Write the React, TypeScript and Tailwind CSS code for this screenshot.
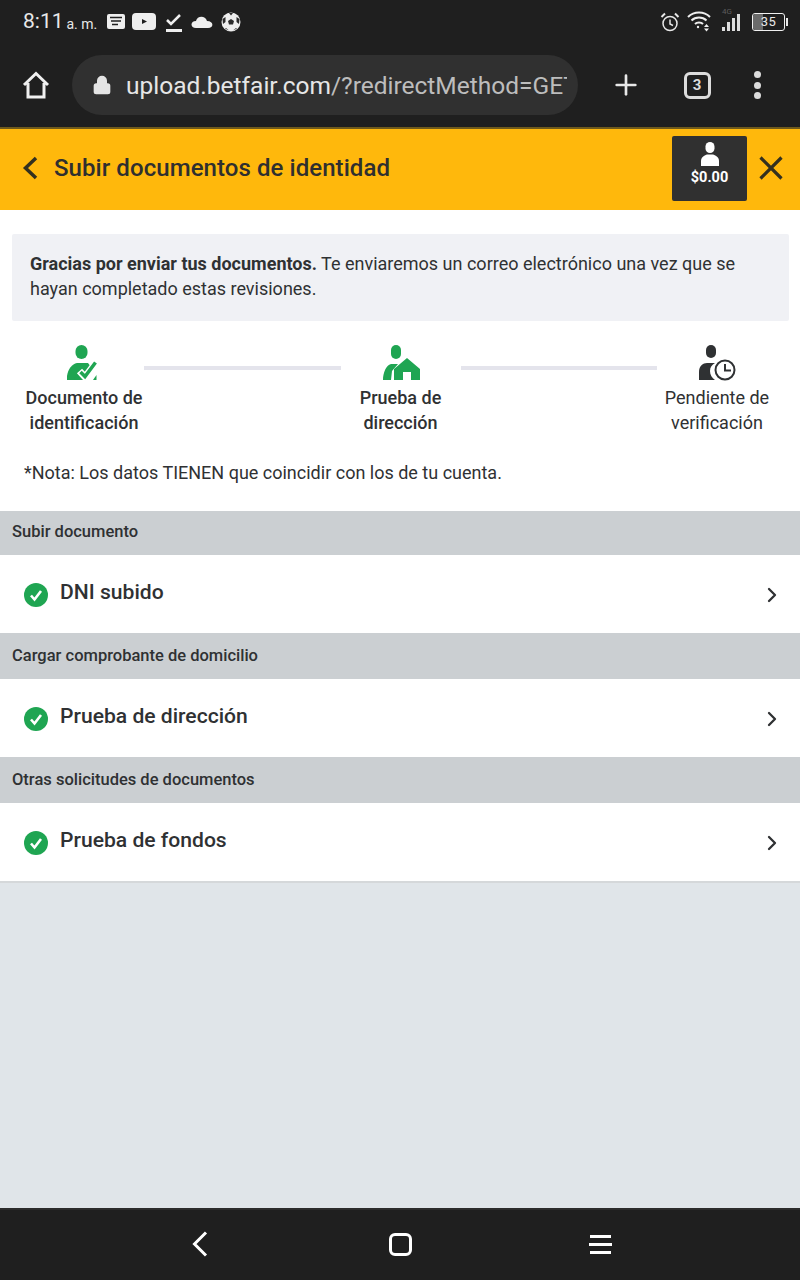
import { ChevronRight, Plus, Lock } from 'lucide-react';

function IdIcon() {
  return (
    <svg width="34" height="36" viewBox="0 0 34 36">
      <rect x="8.500" y="0" width="12" height="14" rx="6" fill="#1fa552" />
      <path d="M0 35 V31 C1 24 5 19 10 18 H21 L24 22 L19 35 Z" fill="#1fa552" />
      <path d="M12.500 26 L18 32 L29 17.500" stroke="#fff" strokeWidth="7" fill="none" />
      <path d="M13.500 27 L18 31.500 L28.500 17.500" stroke="#1fa552" strokeWidth="3.500" fill="none" />
      <path d="M9 30 L14 35 H7 Z" fill="#1fa552" />
      <path d="M26 35 L29.500 30 L29.500 35 Z" fill="#1fa552" />
    </svg>
  );
}

function AddressIcon() {
  return (
    <svg width="38" height="36" viewBox="0 0 38 36">
      <rect x="9" y="0" width="10" height="14" rx="5" fill="#1fa552" />
      <path d="M1 35 C1 28 4 20 9 19 H16 L10 26 L9 35 Z" fill="#1fa552" />
      <path d="M12 35 V24 L25 13 L38 24 V35 H29 V27 H21 V35 Z" fill="#1fa552" />
    </svg>
  );
}

function PendingIcon() {
  return (
    <svg width="37" height="36" viewBox="0 0 37 36">
      <rect x="7" y="0" width="10" height="13" rx="5" fill="#2f3133" />
      <circle cx="26" cy="25" r="9.500" fill="none" stroke="#2f3133" strokeWidth="2" />
      <path d="M0 35 L0 27 C0 21 4 18 8 18 L16 18 C13 20 11 22 11 26 C11 30 13 33 16 35 Z" fill="#2f3133" />
      <path d="M26 19 L26 25.500 L32 25.500" fill="none" stroke="#2f3133" strokeWidth="2" />
    </svg>
  );
}

function StatusBar() {
  return (
    <div className="h-[43px] flex items-center pl-[23px] pr-[12px] text-[#e8e8e8]">
      <span className="text-[21px] leading-none">8:11</span>
      <span className="text-[14px] leading-none ml-[3px] mt-[5px]">a. m.</span>
      <svg className="ml-[9px]" width="20" height="16" viewBox="0 0 20 16">
        <rect x="1" y="0" width="18" height="15" rx="2" fill="#eee" />
        <path d="M4 3.500 H16 M5 7 H15 M6 10.500 H12" stroke="#1f1f1f" strokeWidth="1.500" />
      </svg>
      <svg className="ml-[6px]" width="24" height="17" viewBox="0 0 24 17">
        <rect x="0" y="0" width="24" height="17" rx="4" fill="#eee" />
        <path d="M10 6 L15 8.500 L10 11 Z" fill="#1f1f1f" />
      </svg>
      <svg className="ml-[9px]" width="18" height="20" viewBox="0 0 18 20">
        <path d="M2 8 L6 12 L15 3" stroke="#eee" strokeWidth="2.500" fill="none" />
        <rect x="1" y="17" width="16" height="3" fill="#eee" />
      </svg>
      <svg className="ml-[8px]" width="22" height="15" viewBox="0 0 22 15">
        <path d="M5 14 C-1 14 -1 7 5 7 C6 2 14 1 16 7 C23 7 23 14 17 14 Z" fill="#eee" />
      </svg>
      <svg className="ml-[8px]" width="20" height="20" viewBox="0 0 20 20">
        <circle cx="10" cy="10" r="9.500" fill="#eee" />
        <path d="M10 7 L13 9 L12 12.500 L8 12.500 L7 9 Z M8 1 L12 1 L10 3.500 Z M1.500 7 L4.500 5 L4.500 10 L2 12 Z M18.500 7 L15.500 5 L15.500 10 L18 12 Z M5 16 L8 18.500 L4 16.500 Z M15 16 L12 18.500 L16 16.500 Z" fill="#2a2a2a" />
      </svg>
      <div className="flex-1" />
      <svg width="20" height="20" viewBox="0 0 20 20" fill="none" stroke="#e8e8e8" strokeWidth="1.500" className="-ml-[1px]">
        <circle cx="10" cy="11.500" r="7" />
        <path d="M10 7.500 V12 L13 13.500" />
        <path d="M1.500 5 L5 1.500 M18.500 5 L15 1.500" strokeWidth="2" />
      </svg>
      <svg className="ml-[7px]" width="24" height="21" viewBox="0 0 24 21" fill="none" stroke="#eee" strokeWidth="2">
        <path d="M1 6 C7 0 17 0 23 6" />
        <path d="M4.500 9.500 C8.500 5.500 15.500 5.500 19.500 9.500" />
        <path d="M8 13 C10 11 14 11 16 13" />
        <circle cx="11" cy="16" r="1.200" fill="#eee" stroke="none" />
        <path d="M17 16 L19.500 13 L22 16 Z M17 17.500 L19.500 20.500 L22 17.500 Z" fill="#eee" stroke="none" />
      </svg>
      <div className="ml-[11px] relative w-[18px] h-[23px] mb-[4px]">
        <span className="absolute left-0 top-0 text-[8px] leading-none text-[#5c5c5c]">4G</span>
        <div className="absolute bottom-0 left-0 flex items-end gap-[2px]">
          <div className="w-[3px] h-[4px] bg-[#ddd]" />
          <div className="w-[3px] h-[9px] bg-[#ddd]" />
          <div className="w-[3px] h-[13px] bg-[#ddd]" />
          <div className="w-[3px] h-[17px] bg-[#ddd]" />
        </div>
      </div>
      <div className="ml-[12px] flex items-center">
        <div className="relative w-[33px] h-[18px] border border-[#f0f0f0] rounded-[3px] overflow-hidden flex items-center justify-center">
          <div className="absolute left-0 top-0 bottom-0 w-[10px] bg-[#6a6a6a]" />
          <span className="relative text-[13px] leading-none tracking-[0.5px]">35</span>
        </div>
        <div className="w-[2px] h-[8px] bg-[#e8e8e8] ml-[1px]" />
      </div>
    </div>
  );
}

function BrowserBar() {
  return (
    <div className="h-[84px] flex items-start">
      <div className="w-[72px] h-[60px] mt-[12px] flex items-center justify-center">
        <svg width="28" height="28" viewBox="0 0 28 28" fill="none" stroke="#f0f0f0" strokeWidth="3">
          <path d="M2 14 L14 2.500 L26 14 M6 12 V26 H22 V12" />
        </svg>
      </div>
      <div className="w-[506px] h-[60px] mt-[12px] bg-[#303030] rounded-[30px] flex items-center pl-[20px] overflow-hidden">
        <Lock size={20} color="#e4e4e4" fill="#e4e4e4" className="shrink-0" />
        <div className="ml-[14px] mt-[2px] w-[441px] overflow-hidden whitespace-nowrap text-[24.500px] text-[#bdbdbd]">
          <span className="text-[#e6e6e6]">upload.betfair.com</span>/?redirectMethod=GET
        </div>
      </div>
      <div className="w-[96px] h-[60px] mt-[12px] flex items-center justify-center">
        <Plus size={32} color="#e8e8e8" strokeWidth={2} />
      </div>
      <div className="w-[48px] h-[60px] mt-[12px] flex items-center justify-center -ml-[1px]">
        <div className="w-[27px] h-[27px] border-[3px] border-[#dcdcdc] rounded-[6px] flex items-center justify-center text-[15px] font-bold text-[#dcdcdc]">3</div>
      </div>
      <div className="w-[61px] h-[60px] mt-[12px] flex flex-col items-center justify-center gap-[3.500px] pl-[11px]">
        <div className="w-[7px] h-[7px] rounded-full bg-[#dcdcdc]" />
        <div className="w-[7px] h-[7px] rounded-full bg-[#dcdcdc]" />
        <div className="w-[7px] h-[7px] rounded-full bg-[#dcdcdc]" />
      </div>
    </div>
  );
}

function Header() {
  return (
    <div className="h-[83px] bg-[#ffb80c] border-t-[2px] border-[#6f5a1c] flex items-center pl-[22px]">
      <svg width="16" height="24" viewBox="0 0 16 24" fill="none" stroke="#33301f" strokeWidth="3.500" className="mb-[4px]">
        <path d="M14 2 L3.500 12 L14 22" />
      </svg>
      <h1 className="ml-[16px] mb-[4px] text-[24px] font-medium text-[#2f2f2f] flex-1 tracking-[0.07px]">Subir documentos de identidad</h1>
      <div className="w-[75px] h-[65px] mb-[2px] bg-[#303030] rounded-[2px] flex flex-col items-center pt-[6px]">
        <svg width="20" height="24" viewBox="0 0 20 24" fill="#fff">
          <rect x="5.500" y="0" width="9" height="11" rx="4.500" />
          <path d="M1 24 V19 C1 15 5 13 7 12.500 H13 C15 13 19 15 19 19 V24 Z" />
        </svg>
        <span className="text-[14.500px] leading-none mt-[5px] font-bold text-white">$0.00</span>
      </div>
      <div className="w-[53px] flex items-center pl-[12px] mb-[4px]">
        <svg width="24" height="24" viewBox="0 0 24 24" fill="none" stroke="#33301f" strokeWidth="3.200">
          <path d="M1.500 1.500 L22.500 22.500 M22.500 1.500 L1.500 22.500" />
        </svg>
      </div>
    </div>
  );
}

function Step({ icon, title, bold }: { icon: React.ReactNode; title: [string, string]; bold?: boolean }) {
  return (
    <div className="w-[120px] shrink-0 flex flex-col items-center">
      <div className="h-[36px] flex justify-center">{icon}</div>
      <div className={`mt-[4px] text-center text-[18px] leading-[25px] whitespace-nowrap text-[#2f3133] ${bold ? 'font-medium' : 'font-normal'}`}>
        {title[0]}<br />{title[1]}
      </div>
    </div>
  );
}

function Stepper() {
  return (
    <div className="flex pl-[24px] pr-[23px] pt-[24px]">
      <Step icon={<IdIcon />} title={['Documento de', 'identificación']} bold />
      <div className="flex-1 h-[4px] bg-[#e4e4ec] mt-[21px]" />
      <Step icon={<AddressIcon />} title={['Prueba de', 'dirección']} bold />
      <div className="flex-1 h-[4px] bg-[#e4e4ec] mt-[21px]" />
      <Step icon={<PendingIcon />} title={['Pendiente de', 'verificación']} />
    </div>
  );
}

function DocSection({ heading, label, headH }: { heading: string; label: string; headH: string }) {
  return (
    <div>
      <div className={`${headH} bg-[#cbcfd2] flex items-center pl-[12px] text-[16.500px] font-medium text-[#2f3133]`}>{heading}</div>
      <div className="h-[78px] bg-white flex items-center pl-[24px] pr-[16px]">
        <svg width="24" height="24" viewBox="0 0 24 24" className="mt-[1px]">
          <circle cx="12" cy="12" r="12" fill="#1fa552" />
          <path d="M7 12.500 L10.500 16.500 L17 8" stroke="#fff" strokeWidth="2.600" fill="none" />
        </svg>
        <span className="ml-[12px] flex-1 text-[21.100px] font-medium text-[#2f3133] mb-[5px]">{label}</span>
        <ChevronRight size={24} color="#2f3133" strokeWidth={2.300} className="mt-[2px]" />
      </div>
    </div>
  );
}

function NavBar() {
  return (
    <div className="h-[72px] bg-[#1f1f1f] border-t-[2px] border-t-[#2c2c2c] flex items-center justify-center">
      <div className="w-[200px] flex justify-center">
        <svg width="16" height="26" viewBox="0 0 16 26" fill="none" stroke="#fff" strokeWidth="3" className="mb-[2px]">
          <path d="M14 1.500 L2.500 13 L14 24.500" />
        </svg>
      </div>
      <div className="w-[200px] flex justify-center mb-[2px]">
        <div className="w-[23px] h-[23px] border-[3px] border-white rounded-[6px]" />
      </div>
      <div className="w-[200px] flex flex-col items-center gap-[5px] mb-[2px]">
        <div className="w-[21px] h-[3px] bg-white" />
        <div className="w-[23px] h-[3px] bg-white" />
        <div className="w-[21px] h-[3px] bg-white" />
      </div>
    </div>
  );
}

export default function App() {
  return (
    <div className="w-[800px] h-[1280px] flex flex-col overflow-hidden bg-white font-['Roboto',sans-serif]">
      <div className="bg-[#1f1f1f]">
        <StatusBar />
        <BrowserBar />
      </div>
      <Header />
      <div className="pt-[24px] px-[12px] pr-[11px]">
        <div className="h-[87px] bg-[#f0f1f5] rounded-[2px] pl-[18px] pr-[18px] pb-[3px] flex items-center text-[18px] leading-[25px] text-[#2f3133]">
          <p><span className="font-bold">Gracias por enviar tus documentos.</span> Te enviaremos un correo electrónico una vez que se hayan completado estas revisiones.</p>
        </div>
      </div>
      <Stepper />
      <p className="mt-[25px] h-[51px] pl-[24px] text-[18px] leading-[25px] text-[#2f3133]">*Nota: Los datos TIENEN que coincidir con los de tu cuenta.</p>
      <DocSection heading="Subir documento" label="DNI subido" headH="h-[44px] pb-[2px]" />
      <DocSection heading="Cargar comprobante de domicilio" label="Prueba de dirección" headH="h-[46px]" />
      <DocSection heading="Otras solicitudes de documentos" label="Prueba de fondos" headH="h-[46px]" />
      <div className="flex-1 bg-[#e0e5e9] border-t-[2px] border-[#d5d8da]" />
      <NavBar />
    </div>
  );
}
